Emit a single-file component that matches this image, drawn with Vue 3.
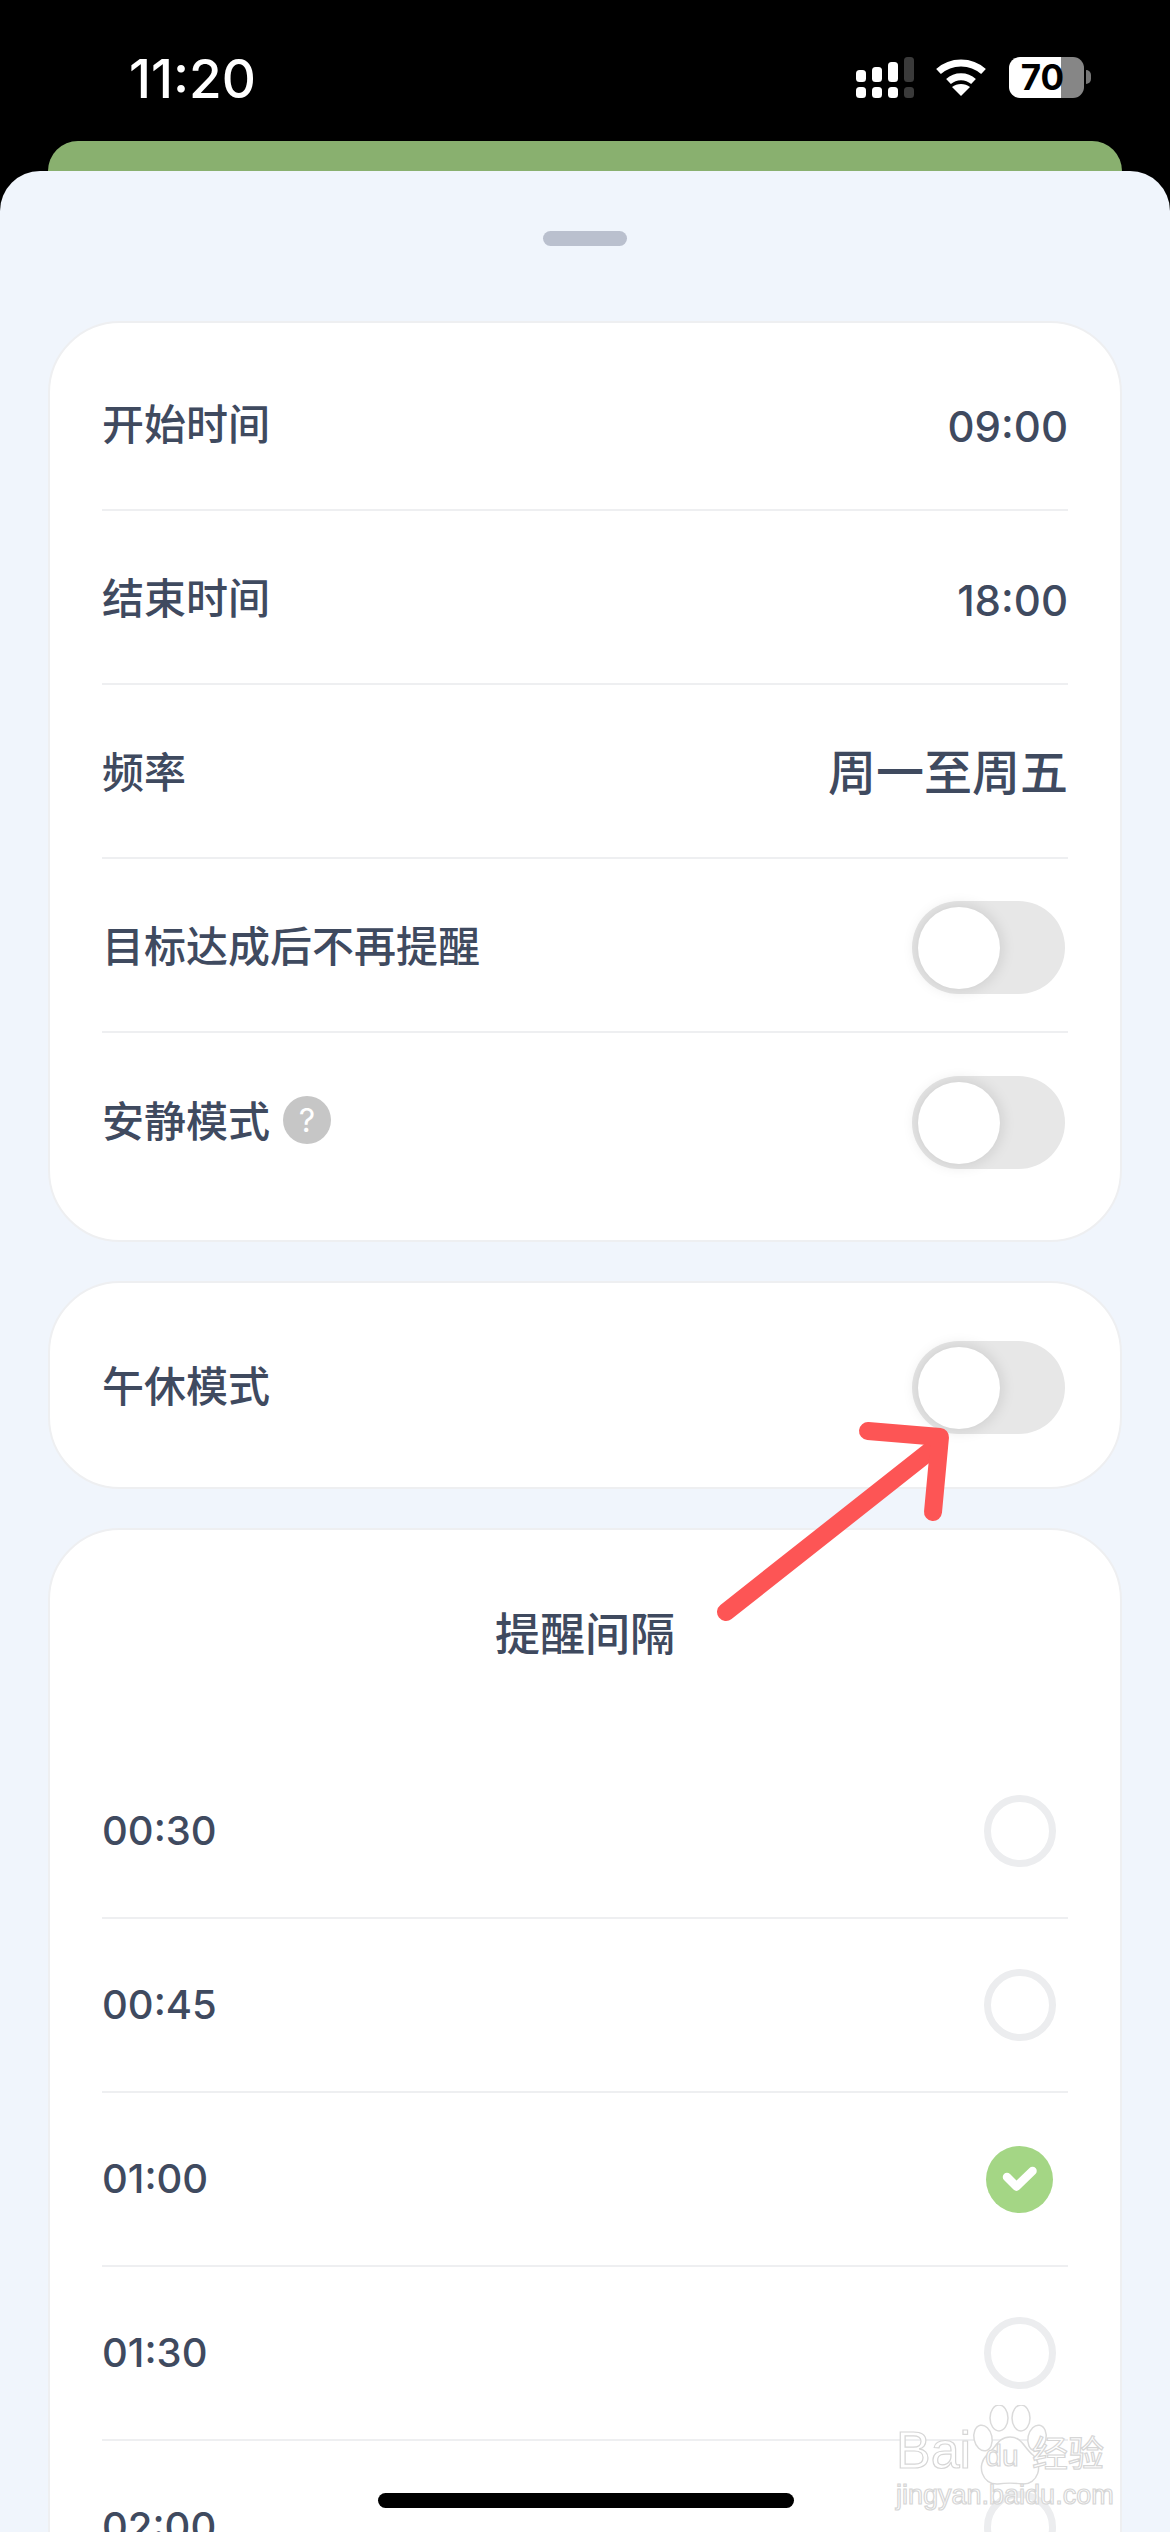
<script setup>
const settings = [
  { label: '开始时间', value: '09:00' },
  { label: '结束时间', value: '18:00' },
  { label: '频率', value: '周一至周五', wide: true },
  { label: '目标达成后不再提醒', toggle: true },
  { label: '安静模式', toggle: true, help: true },
]

const intervals = [
  { label: '00:30' },
  { label: '00:45' },
  { label: '01:00', checked: true },
  { label: '01:30' },
  { label: '02:00' },
]
</script>

<template>
  <div class="screen">
    <header class="status">
      <span class="status__time">11:20</span>
      <div class="status__icons">
        <svg class="signal" width="58" height="42" viewBox="0 0 58 42" fill="#fff">
          <rect x="0" y="13" width="10" height="12" rx="3.5" />
          <rect x="16" y="10" width="10" height="15" rx="3.5" />
          <rect x="32" y="5" width="10" height="20" rx="3.5" />
          <rect x="48" y="0" width="10" height="25" rx="3.5" fill="#3a3a3a" />
          <rect x="0" y="30" width="10" height="11" rx="3.5" />
          <rect x="16" y="30" width="10" height="11" rx="3.5" />
          <rect x="32" y="30" width="10" height="11" rx="3.5" />
          <rect x="48" y="30" width="10" height="11" rx="3.5" fill="#3a3a3a" />
        </svg>
        <svg class="wifi" width="50" height="37" viewBox="0 0 50 37" fill="none" stroke="#fff" stroke-width="7">
          <path d="M2.5 12.5C15 1 35 1 47.5 12.5" />
          <path d="M12.5 22.5C19.5 16 30.5 16 37.5 22.5" />
          <path d="M25 37L16 28C21 24 29 24 34 28Z" fill="#fff" stroke="none" />
        </svg>
        <div class="battery">
          <span class="battery__level">70</span>
        </div>
        <span class="battery__nub"></span>
      </div>
    </header>

    <div class="peek"></div>

    <main class="sheet">
      <div class="sheet__handle"></div>

      <section class="card card--list">
        <div v-for="item in settings" :key="item.label" class="row">
          <div class="row__label">
            {{ item.label }}
            <span v-if="item.help" class="help">?</span>
          </div>
          <div v-if="item.toggle" class="toggle"><span class="toggle__knob"></span></div>
          <div v-else class="row__value" :class="{ 'row__value--wide': item.wide }">{{ item.value }}</div>
        </div>
      </section>

      <section class="card">
        <div class="row row--single">
          <div class="row__label">午休模式</div>
          <div class="toggle"><span class="toggle__knob"></span></div>
        </div>
      </section>

      <section class="card">
        <h2 class="card__title">提醒间隔</h2>
        <div v-for="item in intervals" :key="item.label" class="row">
          <div class="row__label row__label--time">{{ item.label }}</div>
          <div v-if="item.checked" class="radio radio--on">
            <svg width="36" height="30" viewBox="0 0 36 30" fill="none">
              <path d="M5 13L14.500 22.500L30.500 7" stroke="#fff" stroke-width="8.500" stroke-linecap="round" stroke-linejoin="round" />
            </svg>
          </div>
          <div v-else class="radio"></div>
        </div>
      </section>
    </main>

    <svg class="arrow" width="260" height="220" viewBox="700 1410 260 220" fill="none" stroke="#fd5555" stroke-width="18" stroke-linecap="round" stroke-linejoin="round">
      <path d="M726 1612L935 1447" />
      <path d="M868 1431L940 1437L933 1512" />
    </svg>

    <div class="home-bar"></div>

    <div class="watermark">
      <svg class="watermark__paw" width="84" height="84" viewBox="0 0 84 84" fill="#fff" stroke="#dadada" stroke-width="1.500">
        <ellipse cx="31" cy="13" rx="9" ry="13" />
        <ellipse cx="53" cy="13" rx="9" ry="13" />
        <ellipse cx="15" cy="33" rx="9" ry="13" transform="rotate(-12 15 33)" />
        <ellipse cx="69" cy="33" rx="9" ry="13" transform="rotate(12 69 33)" />
        <path d="M42 32C54 32 56 43 65 50C76 60 70 80 54 79C48 78 36 78 30 79C14 80 8 60 19 50C28 43 30 32 42 32Z" />
      </svg>
      <div class="watermark__main">
        <span class="watermark__bai">Bai</span>
        <span class="watermark__du">du</span>
        <span class="watermark__cn">经验</span>
      </div>
      <div class="watermark__url">jingyan.baidu.com</div>
    </div>
  </div>
</template>

<style>
body {
  margin: 0;
}
</style>

<style scoped>
.screen {
  position: relative;
  width: 1170px;
  height: 2532px;
  overflow: hidden;
  background: #000;
  font-family: Inter, "Noto Sans CJK SC", sans-serif;
  color: #3f4a5f;
}

.status {
  display: flex;
  height: 141px;
  box-sizing: border-box;
  align-items: flex-start;
  justify-content: space-between;
  padding: 57px 79px 0 129px;
  color: #fff;
}

.status__time {
  font-size: 53px;
  font-weight: 500;
  line-height: 44px;
}

.status__icons {
  display: flex;
  align-items: flex-start;
}

.wifi {
  margin: 2px 23px 0 22px;
}

.battery {
  width: 75px;
  height: 41px;
  border-radius: 11px;
  background: linear-gradient(90deg, #fff 70%, #868686 70%);
  color: #000;
  font-size: 35px;
  font-weight: 700;
  line-height: 41px;
  text-align: center;
}

.battery__level {
  position: relative;
  left: -4px;
}

.battery__nub {
  width: 5px;
  height: 14px;
  margin: 13px 0 0 2px;
  border-radius: 0 7px 7px 0;
  background: #767676;
}

.peek {
  height: 30px;
  margin: 0 48px;
  border-radius: 32px 32px 0 0;
  background: #89b06f;
}

.sheet {
  height: 2361px;
  box-sizing: border-box;
  border-radius: 40px 40px 0 0;
  background: #f0f5fc;
  padding: 60px 48px 0;
}

.sheet__handle {
  width: 84px;
  height: 15px;
  margin: 0 auto 75px;
  border-radius: 8px;
  background: #bac0ce;
}

.card {
  margin-bottom: 39px;
  padding: 0 52px;
  border: 2px solid #eeeff1;
  border-radius: 72px;
  background: #fff;
}

.card--list {
  padding-top: 14px;
  padding-bottom: 33px;
}

.card__title {
  height: 215px;
  margin: 0;
  font-size: 45px;
  font-weight: 500;
  line-height: 209px;
  text-align: center;
}

.row {
  display: flex;
  height: 174px;
  box-sizing: border-box;
  align-items: center;
  justify-content: space-between;
  border-bottom: 2px solid #eeeff1;
}

.card--list .row:last-child {
  border-bottom: 0;
}

.row--single {
  height: 204px;
  border-bottom: 0;
}

.row__label {
  display: flex;
  align-items: center;
  gap: 13px;
  padding-bottom: 4px;
  font-size: 42px;
  font-weight: 500;
}

.row__label--time {
  padding-bottom: 2px;
  font-size: 40px;
}

.row__value {
  padding-top: 6px;
  font-size: 42px;
  font-weight: 500;
}

.row__value--wide {
  padding: 0 0 4px;
  font-size: 48px;
}

.help {
  display: flex;
  width: 48px;
  height: 48px;
  align-items: center;
  justify-content: center;
  margin-top: 4px;
  border-radius: 50%;
  background: #c6c6c6;
  color: #fff;
  font-size: 32px;
  font-weight: 400;
}

.toggle {
  position: relative;
  width: 153px;
  height: 93px;
  margin: 5px 3px 0 0;
  border-radius: 47px;
  background: #e7e7e7;
}

.toggle__knob {
  position: absolute;
  top: 6px;
  left: 6px;
  width: 82px;
  height: 82px;
  border-radius: 50%;
  background: #fff;
  box-shadow: 0 0 16px rgb(0 0 0 / 0.14);
}

.radio {
  width: 72px;
  height: 72px;
  box-sizing: border-box;
  margin-right: 12px;
  border: 7px solid #ecedef;
  border-radius: 50%;
}

.radio--on {
  display: flex;
  width: 67px;
  height: 67px;
  align-items: center;
  justify-content: center;
  margin-right: 15px;
  border: 0;
  background: #a4d685;
}

.arrow {
  position: absolute;
  top: 1410px;
  left: 700px;
}

.home-bar {
  position: absolute;
  bottom: 24px;
  left: 378px;
  width: 416px;
  height: 15px;
  border-radius: 8px;
  background: #000;
}

.watermark {
  position: absolute;
  top: 2405px;
  left: 896px;
  width: 210px;
  font-family: "Liberation Sans", "Noto Sans CJK SC", sans-serif;
  color: #fff;
  -webkit-text-stroke: 1.2px #d6d6d6;
}

.watermark__paw {
  position: absolute;
  top: 0;
  left: 72px;
}

.watermark__main {
  position: relative;
  display: flex;
  height: 75px;
  align-items: flex-end;
  line-height: 1;
}

.watermark__bai {
  width: 76px;
  font-size: 52px;
  margin-bottom: 4px;
}

.watermark__du {
  width: 60px;
  font-size: 30px;
  margin-bottom: 9px;
  text-align: center;
}

.watermark__cn {
  font-size: 36px;
  margin-bottom: 7px;
}

.watermark__url {
  position: relative;
  font-size: 27px;
  line-height: 30px;
  white-space: nowrap;
}
</style>
